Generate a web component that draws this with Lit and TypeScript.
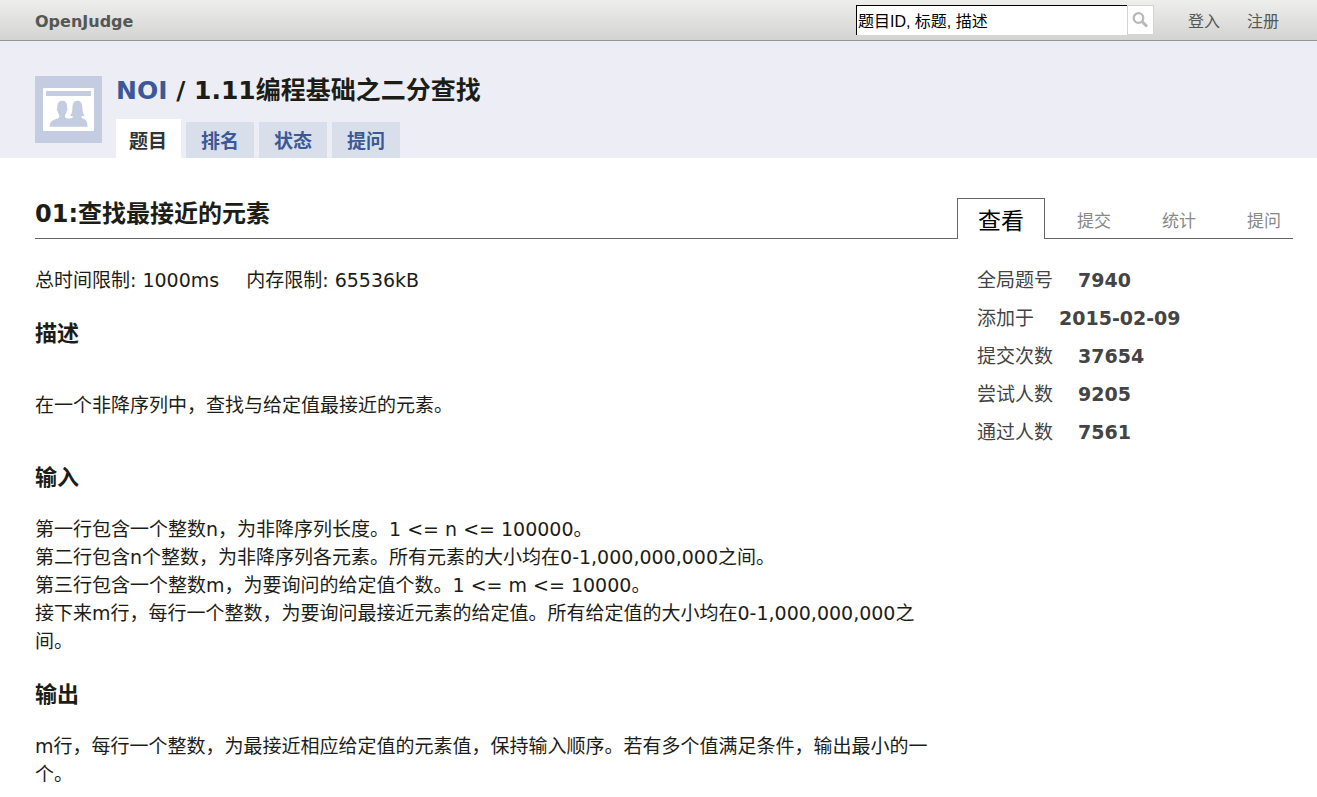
import { LitElement, html, css } from "lit";
import { customElement } from "lit/decorators.js";

const contestTabs = ["排名", "状态", "提问"];
const problemTabs = ["提交", "统计", "提问"];
const stats = [
  ["全局题号", "7940"],
  ["添加于", "2015-02-09"],
  ["提交次数", "37654"],
  ["尝试人数", "9205"],
  ["通过人数", "7561"],
];

@customElement("app-root")
export class AppRoot extends LitElement {
  static styles = css`
    :host {
      display: block;
      font: 19px/28px Verdana, "DejaVu Sans", "Noto Sans CJK SC", sans-serif;
      color: #1d1d18;
      background: #fff;
    }
    * { box-sizing: border-box; }
    a { color: inherit; text-decoration: none; }
    h1, h2, h3, p, ul, dl, dd { margin: 0; padding: 0; }
    ul { list-style: none; }

    .topbar {
      display: flex;
      align-items: flex-end;
      height: 41px;
      padding: 0 38px 5px 35px;
      background: linear-gradient(#eeeeec, #d3d3d1);
      border-bottom: 1px solid #969696;
      font-size: 16px;
      line-height: 26px;
      color: #555753;
    }
    .brand { font-weight: bold; margin-right: auto; }
    .search { display: flex; height: 30px; }
    .query {
      width: 271px;
      padding: 2px 1px 0;
      border: 0 solid #000;
      border-width: 1px 0 0 1px;
      border-radius: 0;
      background: #fff;
      color: #000;
      font: 16px "Liberation Sans", "Noto Sans CJK SC", sans-serif;
      outline: none;
    }
    .query::placeholder { color: #000; opacity: 1; }
    .go {
      display: flex;
      align-items: center;
      justify-content: center;
      width: 27px;
      padding: 0;
      border: 1px solid #d3d3d1;
      background: #fff;
    }
    .account { display: flex; gap: 27px; margin-left: 34px; }

    .banner {
      display: flex;
      gap: 14px;
      padding: 35px 35px 0;
      background: #edeef5;
    }
    .logo { display: block; flex: none; margin-bottom: 15px; }
    .heading {
      display: flex;
      flex-direction: column;
      justify-content: space-between;
    }
    h1 { font-size: 25px; line-height: 30px; }
    h2 { font-size: 24px; line-height: 32px; }
    h1 a { color: #3b5998; }
    .tabs {
      display: flex;
      align-items: flex-end;
      gap: 5px;
      font-weight: bold;
      color: #3b5998;
    }
    .tabs a {
      display: block;
      padding: 5px 15px 3px;
      background: #d8dfea;
    }
    .tabs .current {
      padding: 8px 14px 3px 13px;
      background: #fff;
      color: #2e3436;
    }

    .page { padding: 40px 24px 0 35px; }
    .titlebar { display: flex; align-items: stretch; height: 41px; }
    .titlebar h2 {
      flex: 1;
      border-bottom: 1px solid #666;
    }
    .views {
      display: flex;
      width: 336px;
      font-size: 17px;
      color: #888;
    }
    .views li {
      width: 85px;
      padding: 9px 12px 0 0;
      border-bottom: 1px solid #666;
      text-align: right;
    }
    .views .current {
      width: 88px;
      padding: 8px 0 0;
      border: 1px solid #666;
      border-bottom: 0;
      text-align: center;
      font-size: 23px;
      color: #000;
    }
    .views .current + li { flex: 1; }

    .columns {
      display: grid;
      grid-template-columns: minmax(0, 1fr) 316px;
      gap: 46px;
      padding-top: 27px;
    }
    .limits { display: flex; gap: 27px; }
    h3 { margin: 26px 0 23px; font-size: 22px; line-height: 28px; }
    .summary { padding: 20px 0 19px; }
    .row { display: flex; gap: 25px; height: 38px; color: #444; }
    .row dd { font-weight: bold; }
  `;

  render() {
    return html`
      <header class="topbar">
        <a class="brand" href="#">OpenJudge</a>
        <form class="search" role="search">
          <input class="query" type="text" aria-label="搜索" placeholder="题目ID, 标题, 描述" />
          <button class="go" type="button" aria-label="搜索">
            <svg width="18" height="18" viewBox="0 0 18 18" fill="none" stroke="#b9b9b9">
              <circle cx="7.5" cy="7" r="4.8" stroke-width="2.3" />
              <path d="M11 10.500 16 15.500" stroke-width="3" />
            </svg>
          </button>
        </form>
        <nav class="account"><a href="#">登入</a><a href="#">注册</a></nav>
      </header>

      <div class="banner">
        <svg class="logo" width="67" height="67" viewBox="0 0 67 67">
          <path fill="#c3cce0" d="M0 0h67v67H0z" />
          <rect x="8" y="12" width="51" height="43" rx="1" fill="#fff" />
          <path fill="#c3cce0" d="M11 15h45v5H11z" />
          <path
            fill="#c3cce0"
            d="M14.700 50.700C14.700 47 16 45 19 43.800c3-1.100 5.500-1.600 5.500-3.600 0-1.200-1.500-2.700-1.900-4.900-1-.6-1-2.700-.3-3.300-.3-4.600 1.500-7.300 5-7.300s5.200 2.700 4.800 7.300c.7.700.5 2.700-.4 3.300-.4 2.200-1.800 3.500-1.800 4.900 0 1.400 1.600 2.300 4.100 2.300s4-.8 4.200-2.300c-1.500.1-2.500-.3-3-1 2-1.700 2.100-4.200 2.200-7.200.1-4.700 1.700-7.300 5-7.300s4.900 2.600 5 7.300c.1 3 .4 5.500 2.200 7.200-.8.700-2 1.100-3.300 1 0 1.900 1.500 2.500 3.200 3 2.300.8 3 3.800 3 7.500z"
          />
        </svg>
        <div class="heading">
          <h1><a href="#">NOI</a> / 1.11编程基础之二分查找</h1>
          <nav class="tabs">
            <a class="current" href="#">题目</a>
            ${contestTabs.map((t) => html`<a href="#">${t}</a>`)}
          </nav>
        </div>
      </div>

      <main class="page">
        <div class="titlebar">
          <h2>01:查找最接近的元素</h2>
          <ul class="views">
            <li class="current"><a href="#">查看</a></li>
            ${problemTabs.map((t) => html`<li><a href="#">${t}</a></li>`)}
          </ul>
        </div>
        <div class="columns">
          <article>
            <div class="limits"><span>总时间限制: 1000ms</span><span>内存限制: 65536kB</span></div>
            <h3>描述</h3>
            <p class="summary">在一个非降序列中，查找与给定值最接近的元素。</p>
            <h3>输入</h3>
            <p>
              第一行包含一个整数n，为非降序列长度。1 &lt;= n &lt;= 100000。<br />
              第二行包含n个整数，为非降序列各元素。所有元素的大小均在0-1,000,000,000之间。<br />
              第三行包含一个整数m，为要询问的给定值个数。1 &lt;= m &lt;= 10000。<br />
              接下来m行，每行一个整数，为要询问最接近元素的给定值。所有给定值的大小均在0-1,000,000,000之间。
            </p>
            <h3>输出</h3>
            <p>m行，每行一个整数，为最接近相应给定值的元素值，保持输入顺序。若有多个值满足条件，输出最小的一个。</p>
          </article>
          <aside>
            <dl>
              ${stats.map(([k, v]) => html`<div class="row"><dt>${k}</dt><dd>${v}</dd></div>`)}
            </dl>
          </aside>
        </div>
      </main>
    `;
  }
}
